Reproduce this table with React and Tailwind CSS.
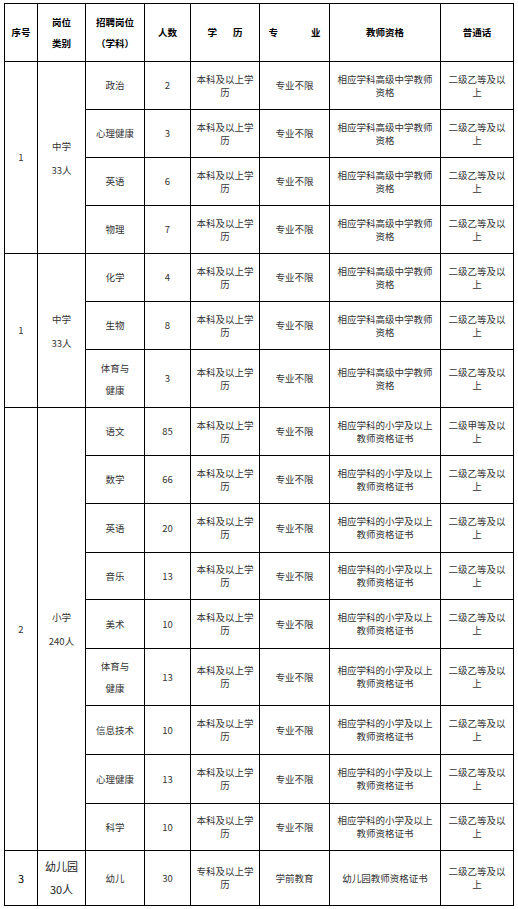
import React from "react";

const F = { fontFamily: '"Noto Sans CJK SC", "Noto Sans", sans-serif' };

const rows = [
  { h: 48, subj: "政治", n: "2" },
  { h: 48, subj: "心理健康", n: "3" },
  { h: 48, subj: "英语", n: "6" },
  { h: 48, subj: "物理", n: "7" },
  { h: 48, subj: "化学", n: "4" },
  { h: 48, subj: "生物", n: "8" },
  { h: 58, subj: "体育与|健康", n: "3" },
  { h: 48, subj: "语文", n: "85" },
  { h: 48, subj: "数学", n: "66" },
  { h: 49, subj: "英语", n: "20" },
  { h: 47, subj: "音乐", n: "13" },
  { h: 49, subj: "美术", n: "10" },
  { h: 57, subj: "体育与|健康", n: "13" },
  { h: 49, subj: "信息技术", n: "10" },
  { h: 49, subj: "心理健康", n: "13" },
  { h: 47, subj: "科学", n: "10" },
];

const td = "border border-black text-center align-middle p-0";

function Subj({ s }) {
  if (s.includes("|")) {
    const [a, b] = s.split("|");
    return (
      <div className="leading-[22px]">
        {a}
        <br />
        {b}
      </div>
    );
  }
  return <div>{s}</div>;
}

export default function App() {
  return (
    <div className="bg-white w-[518px] h-[909px] pl-[4px] pt-[3px]" style={F}>
      <table className="border-collapse table-fixed w-[509px] text-[9.5px] text-[#333] leading-[13px]">
        <colgroup>
          <col className="w-[33px]" />
          <col className="w-[48px]" />
          <col className="w-[59px]" />
          <col className="w-[46px]" />
          <col className="w-[69px]" />
          <col className="w-[70px]" />
          <col className="w-[111px]" />
          <col className="w-[73px]" />
        </colgroup>
        <tbody>
          <tr className="h-[58px] font-bold text-black">
            <td className={td}>序号</td>
            <td className={td}>
              <div className="leading-[21px]">
                岗位
                <br />
                类别
              </div>
            </td>
            <td className={td}>
              <div className="leading-[21px]">
                招聘岗位
                <br />
                （学科）
              </div>
            </td>
            <td className={td}>人数</td>
            <td className={td}>
              <div className="flex justify-center gap-[16px]">
                <span>学</span>
                <span>历</span>
              </div>
            </td>
            <td className={td}>
              <div className="flex justify-center gap-[33px]">
                <span>专</span>
                <span>业</span>
              </div>
            </td>
            <td className={td}>教师资格</td>
            <td className={td}>普通话</td>
          </tr>
          {rows.map((r, i) => {
            const primary = i >= 7;
            return (
              <tr key={i} style={{ height: r.h }}>
                {i === 0 && (
                  <>
                    <td className={td} rowSpan={4}>1</td>
                    <td className={td} rowSpan={4}>
                      <div className="leading-[24px]">
                        中学
                        <br />
                        33人
                      </div>
                    </td>
                  </>
                )}
                {i === 4 && (
                  <>
                    <td className={td} rowSpan={3}>1</td>
                    <td className={td} rowSpan={3}>
                      <div className="leading-[24px]">
                        中学
                        <br />
                        33人
                      </div>
                    </td>
                  </>
                )}
                {i === 7 && (
                  <>
                    <td className={td} rowSpan={9}>2</td>
                    <td className={td} rowSpan={9}>
                      <div className="leading-[24px]">
                        小学
                        <br />
                        240人
                      </div>
                    </td>
                  </>
                )}
                <td className={td}>
                  <Subj s={r.subj} />
                </td>
                <td className={td}>{r.n}</td>
                <td className={`${td} px-[5px]`}>本科及以上学历</td>
                <td className={td}>专业不限</td>
                <td className={`${td} px-[5px]`}>
                  {primary ? "相应学科的小学及以上教师资格证书" : "相应学科高级中学教师资格"}
                </td>
                <td className={`${td} px-[5px]`}>
                  {i === 7 ? "二级甲等及以上" : "二级乙等及以上"}
                </td>
              </tr>
            );
          })}
          <tr className="h-[55px]">
            <td className={`${td} text-[11px] text-black`}>3</td>
            <td className={`${td} text-[11px] text-[#222]`}>
              <div className="leading-[23px]">
                幼儿园
                <br />
                30人
              </div>
            </td>
            <td className={td}>幼儿</td>
            <td className={td}>30</td>
            <td className={`${td} px-[5px]`}>专科及以上学历</td>
            <td className={td}>学前教育</td>
            <td className={`${td} px-[5px]`}>幼儿园教师资格证书</td>
            <td className={`${td} px-[5px]`}>二级乙等及以上</td>
          </tr>
        </tbody>
      </table>
    </div>
  );
}
